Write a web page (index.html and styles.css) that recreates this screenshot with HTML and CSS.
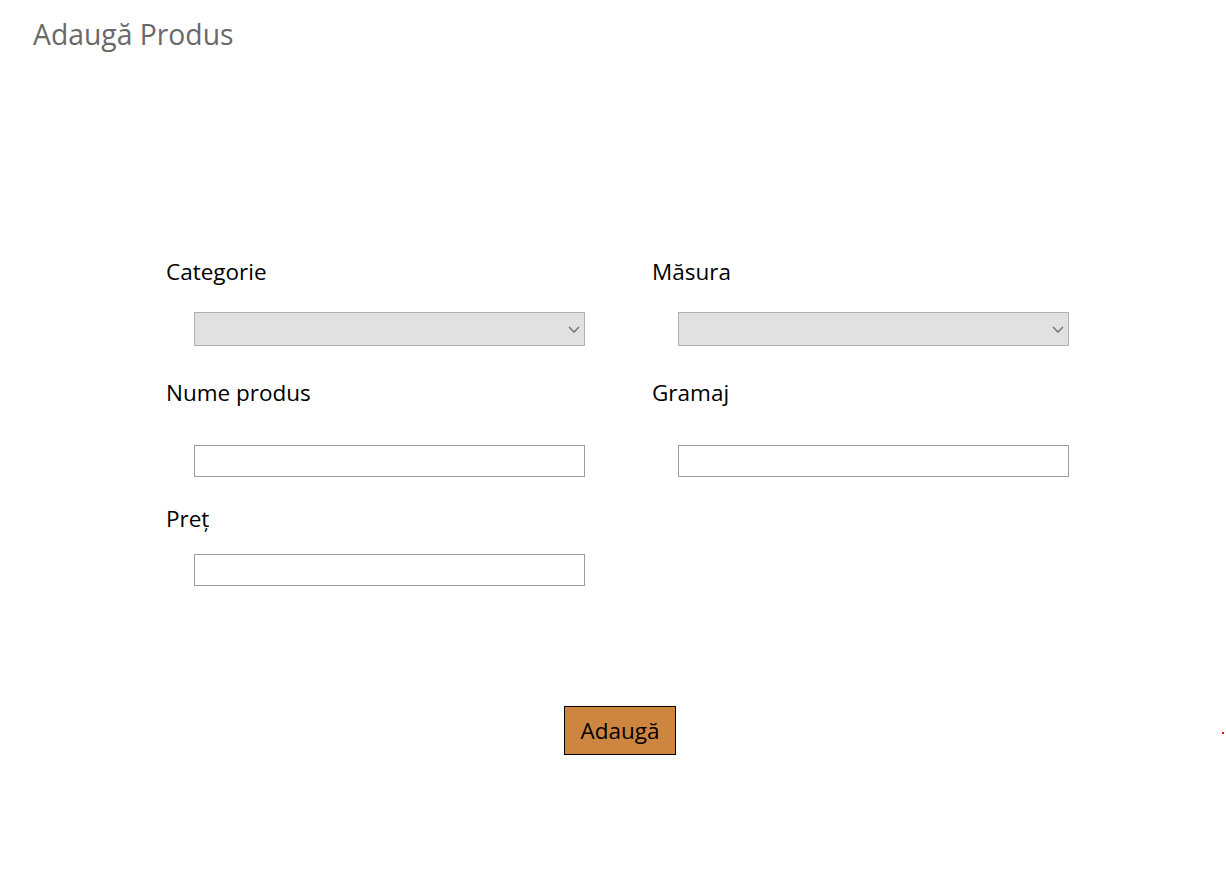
FILE: index.html
```html
<!DOCTYPE html>
<html lang="ro">
<head>
<meta charset="utf-8">
<title>Adaugă Produs</title>
<link rel="stylesheet" href="styles.css">
</head>
<body>
<header class="page-header">
  <h1 class="page-title">Adaugă Produs</h1>
</header>
<main class="form-wrap">
  <form class="product-form">
    <div class="grid">
      <label class="field-label row-a">Categorie</label>
      <label class="field-label row-a">Măsura</label>

      <div class="select-wrap row-b">
        <select class="select"></select>
        <svg class="chev" width="12" height="7" viewBox="0 0 12 7"><path d="M1 1l5 5 5-5" fill="none" stroke="#6b6b6b" stroke-width="1.3"/></svg>
      </div>
      <div class="select-wrap row-b right">
        <select class="select"></select>
        <svg class="chev" width="12" height="7" viewBox="0 0 12 7"><path d="M1 1l5 5 5-5" fill="none" stroke="#6b6b6b" stroke-width="1.3"/></svg>
      </div>

      <label class="field-label row-c">Nume produs</label>
      <label class="field-label row-c">Gramaj</label>

      <input class="text-input row-d" type="text">
      <input class="text-input row-d right" type="text">

      <label class="field-label row-e">Preț</label>
      <span class="empty"></span>

      <input class="text-input row-f" type="text">
      <span class="empty"></span>
    </div>
    <div class="button-row">
      <span class="spacer"></span>
      <button type="button" class="submit">Adaugă</button>
      <span class="dot-cell"><span class="red-dot"></span></span>
    </div>
  </form>
</main>
</body>
</html>
```

FILE: styles.css
```css
html, body {
  margin: 0;
  padding: 0;
  background: #ffffff;
}

body {
  font-family: "Comic Sans MS", "Open Sans", sans-serif;
  color: #000;
}

.page-header {
  padding: 14px 0 0 33px;
}

.page-title {
  margin: 0;
  font-size: 28.3px;
  font-weight: normal;
  line-height: 40px;
  color: #696969;
}

.form-wrap {
  padding-top: 204px;
}

.product-form {
  width: 100%;
}

.grid {
  display: grid;
  grid-template-columns: 486px 422px;
  margin-left: 166px;
  align-items: start;
}

.field-label {
  display: block;
  font-size: 22.5px;
  line-height: 28px;
  height: 28px;
}

.row-c { margin-top: 33px; }
.row-e { margin-top: 28px; }

.select-wrap {
  position: relative;
  margin: 26px 0 0 28px;
  width: 391px;
  height: 34px;
}
.select-wrap.right { margin-left: 26px; }

.select {
  appearance: none;
  -webkit-appearance: none;
  display: block;
  box-sizing: border-box;
  width: 100%;
  height: 100%;
  margin: 0;
  background: #e1e1e1;
  border: 1px solid #b0b0b0;
  border-radius: 0;
}

.chev {
  position: absolute;
  right: 5px;
  top: 14px;
}

.text-input {
  display: block;
  box-sizing: border-box;
  width: 391px;
  height: 32px;
  margin: 0 0 0 28px;
  padding: 0 4px;
  border: 1px solid #9c9c9c;
  border-radius: 0;
  background: #fff;
  font: inherit;
}
.text-input.right { margin-left: 26px; }
.row-d { margin-top: 38px; }
.row-f { margin-top: 21px; }

.button-row {
  display: grid;
  grid-template-columns: 1fr auto 1fr;
  align-items: center;
  margin-top: 120px;
  padding-left: 14px;
}

.submit {
  box-sizing: border-box;
  width: 112px;
  height: 49px;
  background: peru;
  border: 1px solid #000;
  border-radius: 0;
  font-family: inherit;
  font-size: 22.5px;
  color: #000;
  padding: 0;
}

.dot-cell {
  display: flex;
  justify-content: flex-end;
  padding-right: 2px;
  padding-top: 5px;
}

.red-dot {
  width: 2px;
  height: 2px;
  background: #ff0000;
}
```
